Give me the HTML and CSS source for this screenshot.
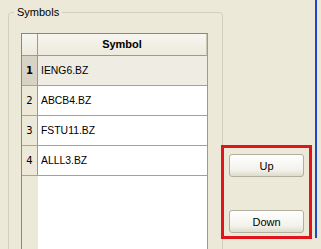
FILE: index.html
```html
<!DOCTYPE html>
<html lang="en">
<head>
    <meta charset="UTF-8">
    <title>Symbols</title>
    <link rel="stylesheet" href="styles.css">
</head>
<body>
    <div class="window">
        <fieldset class="group">
            <legend>Symbols</legend>
            <div class="grid">
                <div class="heads">
                    <div class="corner"></div>
                    <div class="rowhead current">1</div>
                    <div class="rowhead">2</div>
                    <div class="rowhead">3</div>
                    <div class="rowhead">4</div>
                </div>
                <div class="cells">
                    <div class="colhead">Symbol</div>
                    <div class="cell current">IENG6.BZ</div>
                    <div class="cell">ABCB4.BZ</div>
                    <div class="cell">FSTU11.BZ</div>
                    <div class="cell">ALLL3.BZ</div>
                </div>
            </div>
        </fieldset>
        <div class="side">
            <div class="highlight">
                <button type="button">Up</button>
                <button type="button" class="down">Down</button>
            </div>
        </div>
        <div class="edge"></div>
    </div>
</body>
</html>
```

FILE: styles.css
```css
/* Page */
body {
    margin: 0;
    background: #ECE9D8;
    font-family: "Liberation Sans", Arial, sans-serif;
    font-size: 11px;
    color: #000;
    height: 249px;
    overflow: hidden;
}

.window {
    display: flex;
    height: 249px;
    overflow: hidden;
}

/* Group box */
.group {
    box-sizing: border-box;
    width: 215px;
    height: 260px;
    margin: 6px 0 0 8px;
    padding: 0;
    border: 1px solid #D0D0BF;
    border-radius: 4px;
    flex: none;
}

.group legend {
    margin-left: 5px;
    padding: 0 3px;
    line-height: 12px;
}

/* Grid */
.grid {
    display: flex;
    width: 187px;
    height: 230px;
    margin: 15px 0 0 12px;
    box-sizing: border-box;
    border: 1px solid #8A887C;
    border-right-color: #9C9A8E;
}

.heads {
    width: 16px;
    background: #ECE9D8;
    flex: none;
}

.cells {
    flex: 1;
    background: #fff;
}

.corner,
.colhead {
    box-sizing: border-box;
    height: 22px;
    background: linear-gradient(#F7F6F0, #ECEADC);
    border-bottom: 1px solid #9D9A8C;
}

.corner {
    border-right: 1px solid #9D9A8C;
}

.colhead {
    font-weight: bold;
    text-align: center;
    line-height: 21px;
    border-right: 1px solid #C9C6B6;
}

.rowhead {
    box-sizing: border-box;
    height: 30px;
    line-height: 29px;
    text-align: center;
    font-family: "DejaVu Sans", sans-serif;
    font-size: 10px;
    background: #ECE9D8;
    border-right: 1px solid #9D9A8C;
    border-bottom: 1px solid #A7A596;
}

.rowhead.current {
    background: #D6D3C5;
    font-weight: bold;
}

.cell {
    box-sizing: border-box;
    height: 30px;
    line-height: 29px;
    padding-left: 3px;
    font-size: 10.4px;
    border-bottom: 1px solid #A0A0A0;
}

.cell.current {
    background: #EFEDE3;
}

/* Buttons */
.side {
    margin-left: -2px;
    padding-top: 145px;
    flex: none;
}

.highlight {
    box-sizing: border-box;
    width: 91px;
    height: 94px;
    padding: 6px 5px 3px;
    border: 3px solid #E3131B;
    display: flex;
    flex-direction: column;
    justify-content: space-between;
}

.highlight button {
    width: 75px;
    height: 23px;
    margin: 0;
    padding: 0;
    font-family: "Liberation Sans", Arial, sans-serif;
    font-size: 11px;
    color: #000;
    border: 1px solid #B2AF9F;
    border-radius: 3px;
    background: linear-gradient(#FFFFFF, #F3F2EC 70%, #DEDBCD);
}

.edge {
    width: 2px;
    height: 238px;
    margin-left: 3px;
    background: #1D48CC;
    flex: none;
}
```
